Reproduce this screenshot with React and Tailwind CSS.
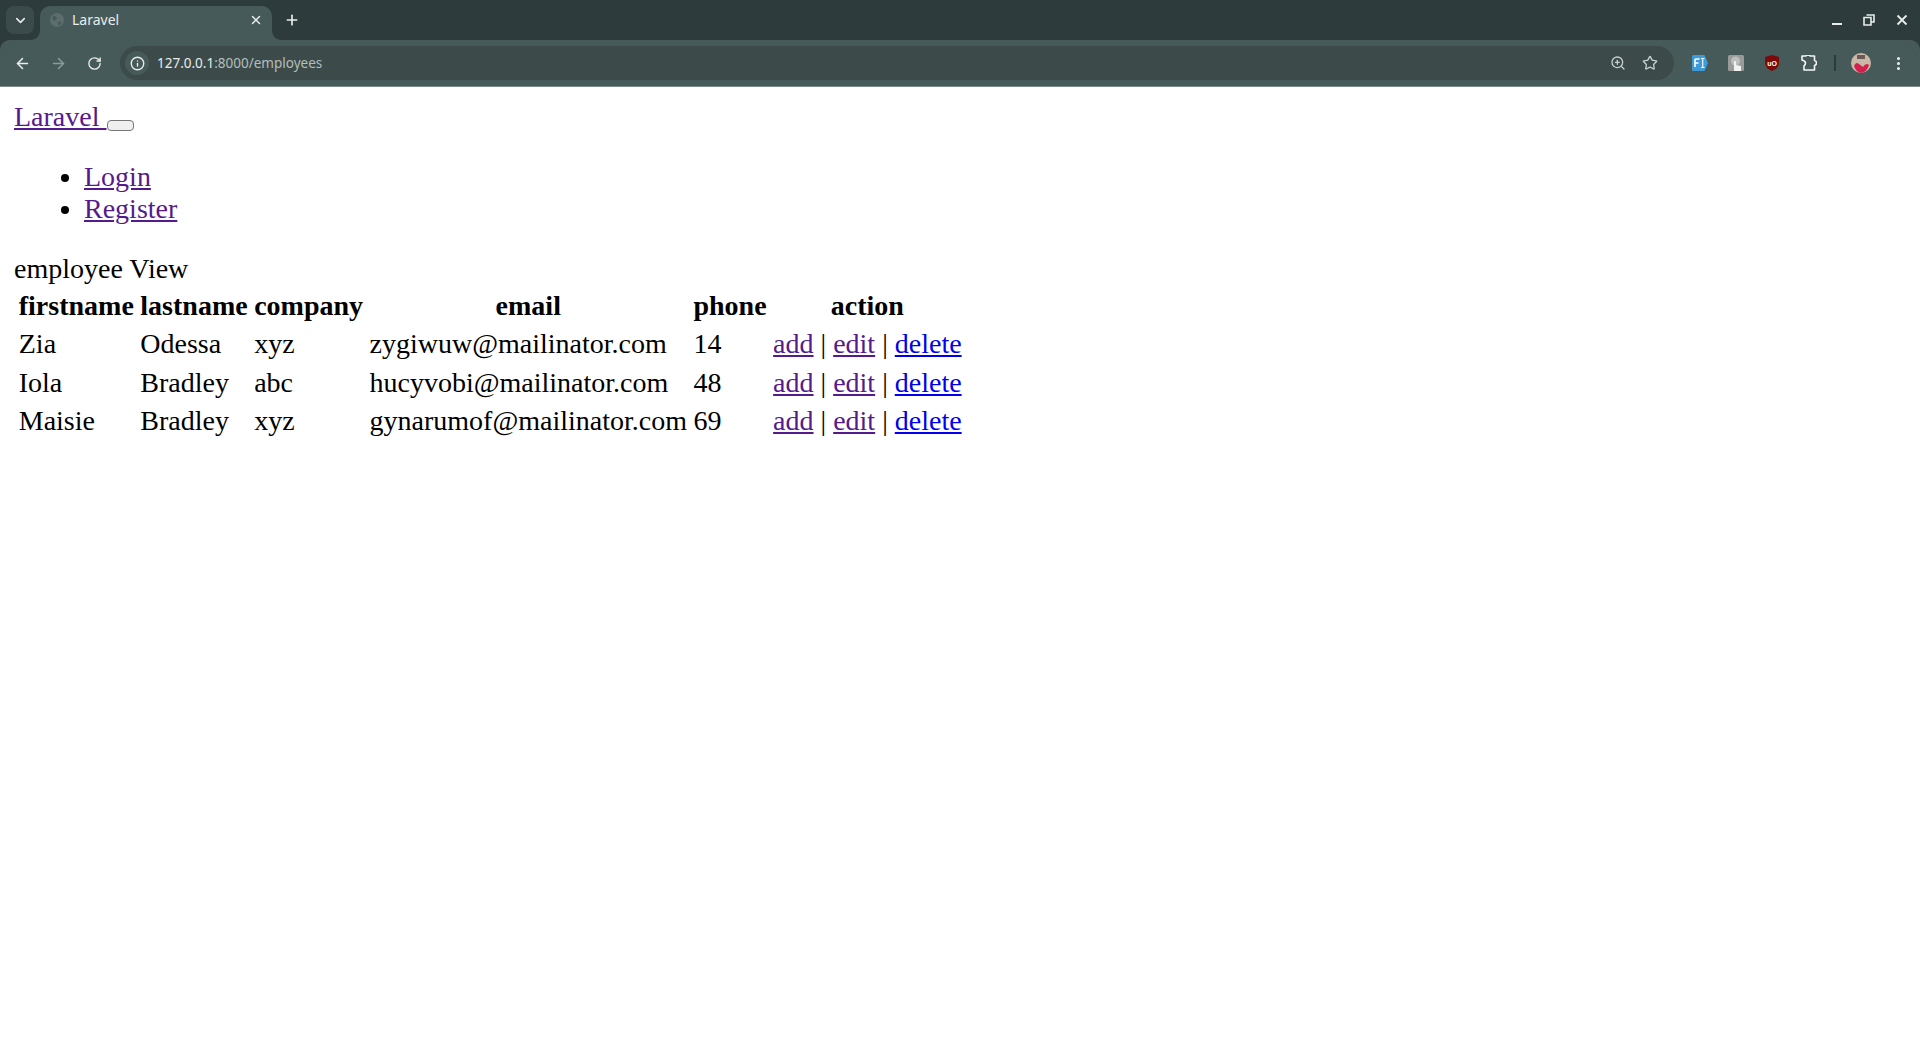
import React from 'react';
import { ChevronDown, X, Plus, ArrowLeft, ArrowRight, RotateCw, Info, ZoomIn, Star, EllipsisVertical } from 'lucide-react';

const employees = [
  { firstname: 'Zia', lastname: 'Odessa', company: 'xyz', email: 'zygiwuw@mailinator.com', phone: '14' },
  { firstname: 'Iola', lastname: 'Bradley', company: 'abc', email: 'hucyvobi@mailinator.com', phone: '48' },
  { firstname: 'Maisie', lastname: 'Bradley', company: 'xyz', email: 'gynarumof@mailinator.com', phone: '69' },
];

const headers = ['firstname', 'lastname', 'company', 'email', 'phone'];

function TabFlare({ flip }) {
  return (
    <svg width="10" height="10" viewBox="0 0 10 10" className={flip ? 'absolute bottom-0 -right-[10px]' : 'absolute bottom-0 -left-[10px]'}>
      <path d={flip ? 'M0 0 C0 6 4 10 10 10 L0 10 Z' : 'M10 0 C10 6 6 10 0 10 L10 10 Z'} fill="#465a59" />
    </svg>
  );
}

function BrowserChrome() {
  return (
    <div className="bg-[#2d3b3c] font-['Noto_Sans',sans-serif]">
      <div className="flex h-[40px] items-end pl-[6px]">
        <div className="mb-[6px] flex h-[28px] w-[28px] items-center justify-center rounded-[8px] bg-[#3b4b4b] text-[#e6ecea]">
          <ChevronDown size={15} strokeWidth={2.5} />
        </div>
        <div className="relative ml-[6px] flex h-[34px] w-[232px] items-center rounded-t-[10px] bg-[#465a59] pb-[6px] pl-[9px] pr-[9px] text-[#e8edeb]">
          <TabFlare />
          <svg width="14" height="14" viewBox="0 0 14 14" className="ml-[1px]">
            <circle cx="7" cy="7" r="7" fill="#5d6d6e" />
            <path d="M3 2.5 L7 4 L6 7 L2.5 7.5 Z M8 9 L11.5 8.5 L10 12 L8 12 Z" fill="#465a59" />
          </svg>
          <span className="ml-[8px] -mt-[1px] flex-1 text-[14px]">Laravel</span>
          <X size={14} strokeWidth={2.5} />
          <TabFlare flip />
        </div>
        <div className="mb-[6px] ml-[6px] flex h-[28px] w-[28px] items-center justify-center text-[#e8edeb]">
          <Plus size={16} strokeWidth={2.5} />
        </div>
        <div className="mb-[14px] ml-auto flex items-center text-[#e8edeb]">
          <svg width="12" height="12" viewBox="0 0 12 12">
            <rect x="1" y="9" width="10" height="2" fill="currentColor" />
          </svg>
          <svg width="12" height="12" viewBox="0 0 12 12" className="ml-[20px]">
            <path d="M3.5 1 H11 V8 H8.5 M1 3.5 H8 V11 H1 Z" fill="none" stroke="currentColor" strokeWidth="1.6" />
          </svg>
          <svg width="12" height="12" viewBox="0 0 12 12" className="ml-[21px] mr-[12px]">
            <path d="M1.5 1.5 L10.5 10.5 M10.5 1.5 L1.5 10.5" stroke="currentColor" strokeWidth="1.8" />
          </svg>
        </div>
      </div>
      <div className="flex h-[47px] items-center rounded-t-[10px] border-b border-[#7d8b8a] bg-[#465a59] text-[#e8edeb]">
        <ArrowLeft size={17} strokeWidth={2.2} className="ml-[14px]" />
        <ArrowRight size={17} strokeWidth={2.2} className="ml-[19px] text-[#8b9998]" />
        <RotateCw size={15} strokeWidth={2.2} className="ml-[20px]" />
        <div className="ml-[18px] flex h-[34px] w-[1554px] items-center rounded-full bg-[#3c4b4a]">
          <div className="ml-[5px] flex h-[24px] w-[24px] items-center justify-center rounded-full bg-[#465a59]">
            <Info size={15} strokeWidth={2.2} />
          </div>
          <span className="ml-[8px] text-[13.5px]">
            127.0.0.1<span className="text-[#b3bebc]">:8000/employees</span>
          </span>
          <ZoomIn size={16} strokeWidth={2} className="ml-auto text-[#c6cfcd]" />
          <Star size={16} strokeWidth={2} className="ml-[16px] mr-[16px] text-[#c6cfcd]" />
        </div>
        <svg width="16" height="16" viewBox="0 0 16 16" className="ml-[18px]">
          <path d="M0 1.5 Q0 0 1.5 0 H12.5 L16 8 L12.5 16 H1.5 Q0 16 0 14.5 Z" fill="#3f9ad8" />
          <path d="M3 4 H7.5 M3 4 V12 M3 8 H6.5" stroke="#fff" strokeWidth="1.6" fill="none" />
          <path d="M9 3.5 H12.5 M10.75 3.5 V12.5 M9 12.5 H12.5" stroke="#fff" strokeWidth="1.1" fill="none" />
        </svg>
        <svg width="16" height="16" viewBox="0 0 16 16" className="ml-[20px]">
          <rect width="16" height="16" rx="1.5" fill="#9a9a9a" />
          <circle cx="7.5" cy="6" r="4.5" fill="#bdbdbd" />
          <path d="M6 16 V6.5 Q7 5.5 8 6.5 V10 L13 11 V16 Z" fill="#f2f2f2" />
        </svg>
        <svg width="16" height="16" viewBox="0 0 16 16" className="ml-[20px]">
          <path d="M8 0 L15 2 V8 Q15 13 8 16 Q1 13 1 8 V2 Z" fill="#7c0a0a" />
          <text x="8" y="10.5" textAnchor="middle" fontSize="7" fontWeight="700" fill="#fff" fontFamily="Liberation Sans, sans-serif">uO</text>
        </svg>
        <svg width="16" height="16" viewBox="0 0 16 16" className="ml-[21px]">
          <path d="M1 1 H5 Q5.5 0 7 0 Q8.5 0 9 1 H13.5 V5.5 Q15.5 6 15.5 8 Q15.5 10 13.5 10.5 V15 H3 V11 Q4.5 10 4.5 8 Q4.5 6 1 5 Z" fill="none" stroke="#f4f6f5" strokeWidth="1.6" strokeLinejoin="round" />
        </svg>
        <div className="ml-[17px] h-[16px] w-[2px] bg-[#2d3b3c]" />
        <svg width="20" height="20" viewBox="0 0 20 20" className="ml-[15px]">
          <circle cx="10" cy="10" r="10" fill="#c9b8a6" />
          <path d="M3 13 Q5 8 8 11 L12 14 Q15 9 18 12 Q16 19 10 20 Q5 19 3 13 Z" fill="#d5204f" />
          <path d="M6 2 H14 V6 H6 Z" fill="#6a5a55" />
        </svg>
        <EllipsisVertical size={17} strokeWidth={2.4} className="ml-[19px]" />
      </div>
    </div>
  );
}

function Visited({ children }) {
  return <a href="#" className="text-[#551a8b] underline">{children}</a>;
}

function App() {
  return (
    <div className="min-h-[1053px] bg-white text-black">
      <BrowserChrome />
      <div className="p-[14px] font-['Liberation_Serif',serif] text-[28px] leading-[32px]">
        <div>
          <Visited>Laravel&nbsp;</Visited>
          <button className="h-[11px] w-[27px] rounded-[4px] border-[1.5px] border-[#767676] bg-[#efefef] align-[-4px]" />
        </div>
        <ul className="my-[28px] list-disc pl-[70px]">
          <li><Visited>Login</Visited></li>
          <li><Visited>Register</Visited></li>
        </ul>
        <div>employee View</div>
        <table className="border-separate border-spacing-[3px]">
          <thead>
            <tr>
              {headers.map((h) => (
                <th key={h} className="p-[1.75px] text-center font-bold">{h}</th>
              ))}
              <th className="p-[1.75px] text-center font-bold">action</th>
            </tr>
          </thead>
          <tbody>
            {employees.map((e) => (
              <tr key={e.email}>
                {headers.map((h) => (
                  <td key={h} className="p-[1.75px]">{e[h]}</td>
                ))}
                <td className="p-[1.75px]">
                  <Visited>add</Visited> | <Visited>edit</Visited> | <a href="#" className="text-[#0000ee] underline">delete</a>
                </td>
              </tr>
            ))}
          </tbody>
        </table>
      </div>
    </div>
  );
}

export default App;
